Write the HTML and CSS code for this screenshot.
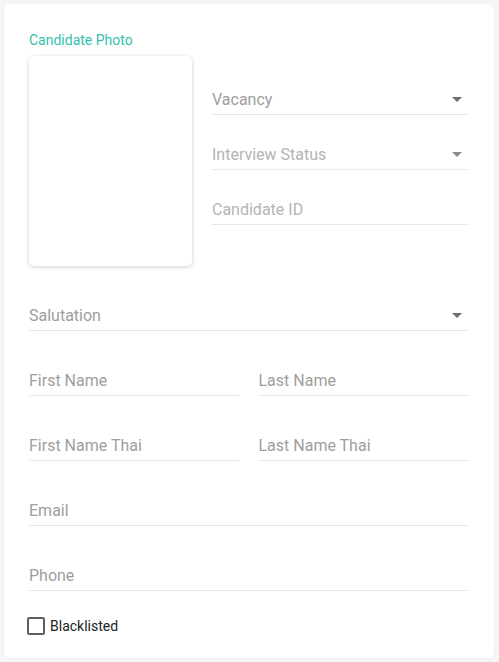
FILE: index.html
```html
<!DOCTYPE html>
<html>
<head>
<meta charset="utf-8">
<link rel="stylesheet" href="styles.css">
</head>
<body>
<div class="card">
  <div class="top">
    <div class="photo-col">
      <div class="photo-label">Candidate Photo</div>
      <div class="photo"></div>
    </div>
    <div class="right-col">
      <div class="field select"><span>Vacancy</span><span class="caret"></span></div>
      <div class="field select disabled"><span>Interview Status</span><span class="caret"></span></div>
      <div class="field disabled"><span>Candidate ID</span></div>
    </div>
  </div>
  <div class="rows">
    <div class="field select"><span>Salutation</span><span class="caret"></span></div>
    <div class="pair">
      <div class="field"><span>First Name</span></div>
      <div class="field"><span>Last Name</span></div>
    </div>
    <div class="pair">
      <div class="field"><span>First Name Thai</span></div>
      <div class="field"><span>Last Name Thai</span></div>
    </div>
    <div class="field"><span>Email</span></div>
    <div class="field"><span>Phone</span></div>
  </div>
  <label class="check"><span class="box"></span><span>Blacklisted</span></label>
</div>
</body>
</html>
```

FILE: styles.css
```css
html, body {
  margin: 0;
  padding: 0;
  background: #f6f6f8;
  font-family: Roboto, "Liberation Sans", sans-serif;
}
body {
  padding: 4px 5px 4px 4px;
}
.card {
  width: 490px;
  height: 654px;
  box-sizing: border-box;
  background: #fff;
  border-radius: 5px;
  box-shadow: 0 0 3px rgba(0, 0, 0, 0.05);
  padding: 28px 26px 0 25px;
}
.top {
  display: flex;
  gap: 20px;
}
.photo-col {
  width: 163px;
  flex: none;
}
.photo-label {
  font-size: 14px;
  line-height: 16px;
  color: #35bfae;
  margin-bottom: 8px;
}
.photo {
  height: 210px;
  border-radius: 5px;
  background: #fff;
  box-shadow: 0 1px 4px rgba(0, 0, 0, 0.2);
}
.right-col {
  flex: 1;
  padding-top: 52px;
  display: flex;
  flex-direction: column;
  gap: 24px;
}
.field {
  height: 31px;
  box-sizing: border-box;
  border-bottom: 1px solid #e4e4ea;
  display: flex;
  align-items: center;
  justify-content: space-between;
  font-size: 16px;
  color: #9e9e9e;
}
.field.disabled {
  border-bottom: 1px dotted #d6d6d6;
  color: #b4b4b4;
}
.caret {
  width: 0;
  height: 0;
  border-left: 5px solid transparent;
  border-right: 5px solid transparent;
  border-top: 5px solid #6f6f6f;
  margin-right: 6px;
}
.field.disabled .caret {
  border-top-color: #8a8a8a;
}
.rows {
  margin-top: 34px;
  display: flex;
  flex-direction: column;
  gap: 34px;
}
.pair {
  display: grid;
  grid-template-columns: 1fr 1fr;
  gap: 20px;
}
.check {
  display: flex;
  align-items: center;
  gap: 5px;
  margin-top: 26px;
  margin-left: -2px;
  font-size: 14px;
  color: #222;
}
.box {
  width: 18px;
  height: 18px;
  box-sizing: border-box;
  border: 2px solid #5f5f5f;
  border-radius: 2px;
}
```
